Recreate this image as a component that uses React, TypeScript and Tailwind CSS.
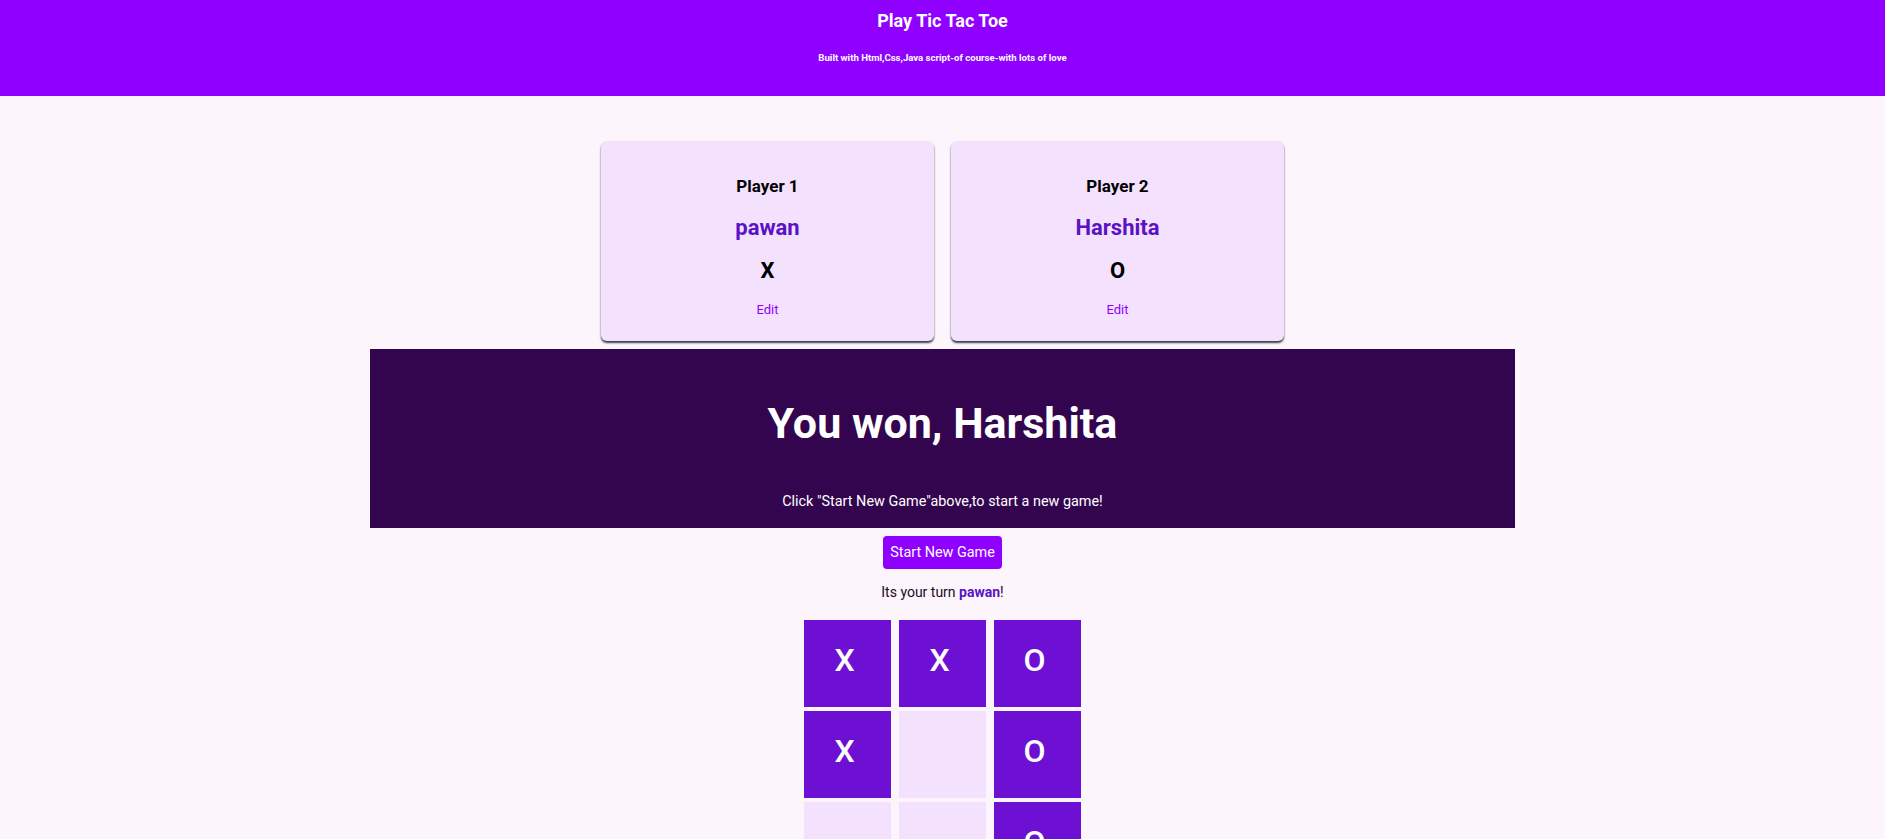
import React from "react";

type Cell = "X" | "O" | null;

const players = [
  { label: "Player 1", name: "pawan", symbol: "X" },
  { label: "Player 2", name: "Harshita", symbol: "O" },
];

const board: Cell[][] = [
  ["X", "X", "O"],
  ["X", null, "O"],
  [null, null, "O"],
];

const PlayerCard: React.FC<{ label: string; name: string; symbol: string }> = ({ label, name, symbol }) => {
  return (
    <li className="flex h-[200px] w-[333px] flex-col items-center rounded-[6px] bg-[#f3e1fd] pt-[35px] shadow-[0_2px_2px_rgba(0,0,0,0.75)]">
      <h2 className="text-[17px] font-bold leading-[20px] text-black">{label}</h2>
      <span className="mt-[19px] text-[22px] font-bold leading-[26px] text-[#5a12c4]">{name}</span>
      <span className="mt-[17px] text-[22px] font-bold leading-[26px] text-black">{symbol}</span>
      <button className="mt-[18px] text-[13px] leading-[16px] text-[#8f00ff]">Edit</button>
    </li>
  );
};

export default function App() {
  return (
    <div className="min-h-[839px] bg-[#fcf5fc] font-['Roboto',sans-serif]">
      {/* Header */}
      <header className="flex h-[96px] flex-col items-center bg-[#8f00ff] pt-[10px] text-white">
        <h1 className="text-[18px] font-bold leading-[21px]">Play Tic Tac Toe</h1>
        <p className="mt-[21px] text-[9.6px] font-bold leading-[12px]">Built with Html,Css,Java script-of course-with lots of love</p>
      </header>

      <main className="flex flex-col items-center pt-[45px]">
        {/* Players */}
        <ol className="flex gap-[17px]">
          {players.map((p) => (
            <PlayerCard key={p.label} {...p} />
          ))}
        </ol>

        {/* Game over banner */}
        <section className="mt-[8px] flex h-[179px] w-[1145px] flex-col items-center bg-[#33054f] pt-[48px] text-white">
          <h2 className="text-[43px] font-bold leading-[52px]">You won, Harshita</h2>
          <p className="mt-[43px] text-[14.4px] leading-[20px]">Click "Start New Game"above,to start a new game!</p>
        </section>

        <button className="mt-[8px] h-[33px] w-[119px] rounded-[4px] bg-[#8f00ff] text-[14.4px] text-white">Start New Game</button>

        <p className="mt-[13px] text-[14px] leading-[20px] text-[#1a0a24]">
          Its your turn <span className="font-bold text-[#5a12c4]">pawan</span>!
        </p>

        {/* Board */}
        <ol className="mt-[18px] grid grid-cols-[87px_87px_87px] gap-x-[8px] gap-y-[4px]">
          {board.flat().map((c, i) => (
            <li
              key={i}
              className={
                c
                  ? "flex h-[87px] items-center justify-center bg-[#6e0fd4] pb-[8px] pr-[6px] text-[32px] font-medium text-white"
                  : "h-[87px] bg-[#f3e1fd]"
              }
            >
              {c}
            </li>
          ))}
        </ol>
      </main>
    </div>
  );
}
